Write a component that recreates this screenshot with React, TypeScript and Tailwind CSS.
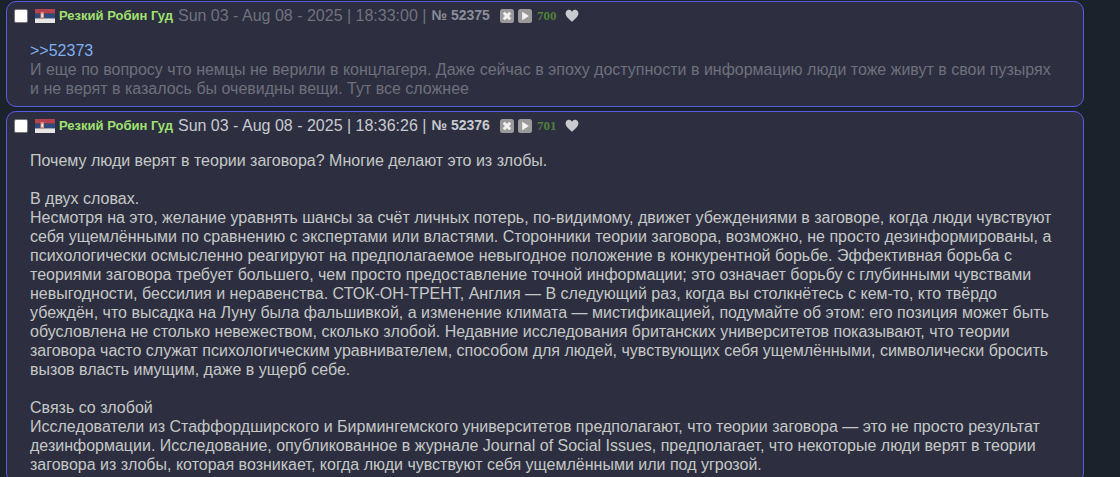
function Flag() {
  return (
    <svg width="20" height="14" viewBox="0 0 20 14" className="shrink-0 mt-[1px]">
      <rect width="20" height="4.7" y="0" fill="#b5404f" />
      <rect width="20" height="4.7" y="4.7" fill="#2f4a7c" />
      <rect width="20" height="4.6" y="9.4" fill="#e6e6e6" />
      <rect x="5.5" y="3" width="3.5" height="7" rx="1" fill="#d9917a" />
      <rect x="6.5" y="5" width="1.5" height="3" fill="#eeeeee" />
    </svg>
  );
}

function Buttons() {
  return (
    <div className="flex items-center gap-[4px] ml-[10px]">
      <svg width="14" height="14" viewBox="0 0 14 14">
        <rect width="14" height="14" rx="2.5" fill="#9a9a9a" />
        <path d="M3.8 3.8l6.4 6.4M10.2 3.8l-6.4 6.4" stroke="#f2f2f2" strokeWidth="3" />
      </svg>
      <svg width="14" height="14" viewBox="0 0 14 14">
        <rect width="14" height="14" rx="2.5" fill="#9a9a9a" />
        <path d="M4.2 2.8v8.4l6.8-4.2z" fill="#f2f2f2" />
      </svg>
    </div>
  );
}

function Heart() {
  return (
    <svg width="14" height="13" viewBox="0 0 24 22" className="ml-[9px]">
      <path d="M12 21.5C5 15.5 1 12 1 7a5.8 5.8 0 0 1 11-2.6A5.8 5.8 0 0 1 23 7c0 5-4 8.5-11 14.5z" fill="#c8cad0" />
    </svg>
  );
}

type PostProps = {
  time: string;
  num: string;
  count: string;
  faded?: boolean;
  children: React.ReactNode;
};

function Post({ time, num, count, faded, children }: PostProps) {
  return (
    <div className="shrink-0 w-[1078px] ml-[6px] border border-[#5b5be0] rounded-[10px] bg-[#2d2f40]">
      <div className="flex items-center h-[27px] pl-[7px]">
        <div className="w-[14px] h-[14px] bg-white border border-[#777] rounded-[2px] shrink-0" />
        <div className="flex items-center ml-[7px]">
          <Flag />
          <span className="ml-[4px] text-[13px] font-bold text-[#a0e070] whitespace-nowrap">Резкий Робин Гуд</span>
        </div>
        <span className={faded ? "ml-[5px] text-[#70727e] whitespace-nowrap" : "ml-[5px] text-[#c8cad0] whitespace-nowrap"}>{time} | </span>
        <span className={faded ? "ml-[5px] text-[#8b8d99] text-[14px] font-bold whitespace-nowrap" : "ml-[5px] text-[#c8cad0] text-[14px] font-bold whitespace-nowrap"}>
          № {num}
        </span>
        <Buttons />
        <span className="ml-[5px] text-[13px] font-bold text-[#4f7f3a] font-['Liberation_Serif',serif]">{count}</span>
        <Heart />
      </div>
      <div className="pl-[23px] pr-[20px] pt-[12px] pb-[8px] leading-[19px]">
        {children}
      </div>
    </div>
  );
}

export default function App() {
  return (
    <div className="h-[477px] overflow-hidden bg-[#1a222c] pt-[1px] flex flex-col gap-[4px] text-[16px] font-['Liberation_Sans',Arial,sans-serif] text-[#c5c8c6]">
      <Post time="Sun 03 - Aug 08 - 2025 | 18:33:00" num="52375" count="700" faded>
        <div className="text-[#7fb0ee]">&gt;&gt;52373</div>
        <div className="text-[#6e707c]">И еще по вопросу что немцы не верили в концлагеря. Даже сейчас в эпоху доступности в информацию люди тоже живут в свои пузырях и не верят в казалось бы очевидны вещи. Тут все сложнее</div>
      </Post>
      <Post time="Sun 03 - Aug 08 - 2025 | 18:36:26" num="52376" count="701">
        <div>Почему люди верят в теории заговора? Многие делают это из злобы.</div>
        <div className="h-[19px]" />
        <div>В двух словах.</div>
        <div>Несмотря на это, желание уравнять шансы за счёт личных потерь, по-видимому, движет убеждениями в заговоре, когда люди чувствуют себя ущемлёнными по сравнению с экспертами или властями. Сторонники теории заговора, возможно, не просто дезинформированы, а психологически осмысленно реагируют на предполагаемое невыгодное положение в конкурентной борьбе. Эффективная борьба с теориями заговора требует большего, чем просто предоставление точной информации; это означает борьбу с глубинными чувствами невыгодности, бессилия и неравенства. СТОК-ОН-ТРЕНТ, Англия — В следующий раз, когда вы столкнётесь с кем-то, кто твёрдо убеждён, что высадка на Луну была фальшивкой, а изменение климата — мистификацией, подумайте об этом: его позиция может быть обусловлена не столько невежеством, сколько злобой. Недавние исследования британских университетов показывают, что теории заговора часто служат психологическим уравнивателем, способом для людей, чувствующих себя ущемлёнными, символически бросить вызов власть имущим, даже в ущерб себе.</div>
        <div className="h-[19px]" />
        <div>Связь со злобой</div>
        <div>Исследователи из Стаффордширского и Бирмингемского университетов предполагают, что теории заговора — это не просто результат дезинформации. Исследование, опубликованное в журнале Journal of Social Issues, предполагает, что некоторые люди верят в теории заговора из злобы, которая возникает, когда люди чувствуют себя ущемлёнными или под угрозой.</div>
      </Post>
    </div>
  );
}
